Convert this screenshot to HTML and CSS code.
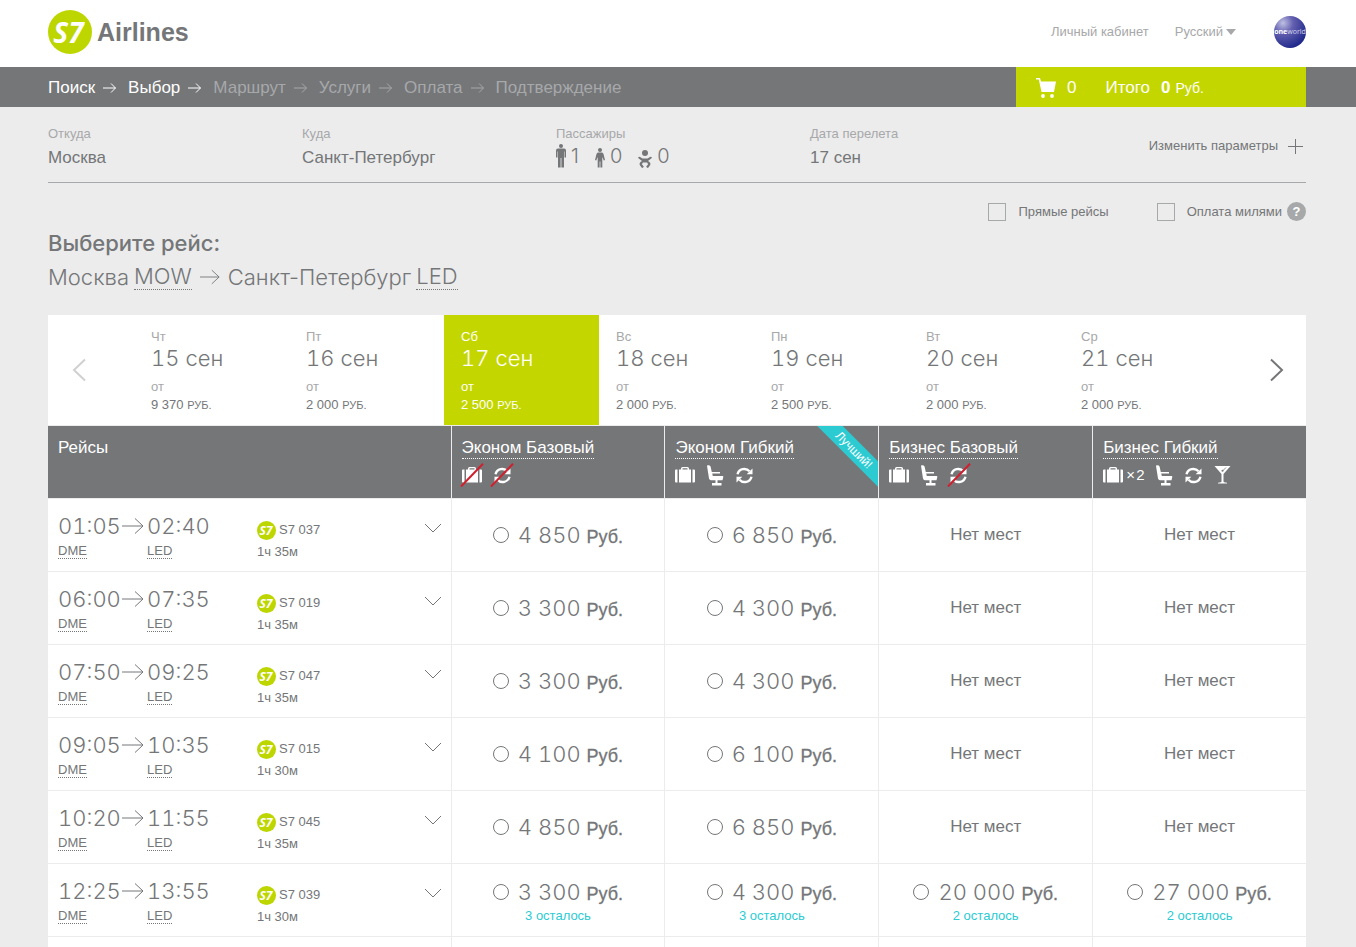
FILE: index.html
```html
<!DOCTYPE html>
<html lang="ru">
<head>
<meta charset="utf-8">
<title>S7 Airlines</title>
<link rel="stylesheet" href="styles.css">
</head>
<body>
<svg class="sprite" aria-hidden="true">
  <symbol id="step" viewBox="0 0 14 12"><path d="M0 6H12.500M8 1.500L12.500 6L8 10.500"/></symbol>
  <symbol id="arrow" viewBox="0 0 22 18"><path d="M0 9H21M13 1.500L21 9L13 16.500"/></symbol>
  <symbol id="down" viewBox="0 0 18 10"><path d="M1 1L9 9L17 1"/></symbol>
  <symbol id="bag" viewBox="0 0 20 16"><path d="M0 3.500Q0 2.500 1 2.500H2.500V15.500H1Q0 15.500 0 14.500ZM4 2.500H6V1.500Q6 0 7.500 0H12.500Q14 0 14 1.500V2.500H16V15.500H4ZM7.500 2.500H12.500V1.300H7.500ZM17.500 2.500H19Q20 2.500 20 3.500V14.500Q20 15.500 19 15.500H17.500Z" fill-rule="evenodd"/></symbol>
  <symbol id="seat" viewBox="0 0 17 21"><path d="M0 .8Q.2 0 1.200 .2L2.600 .6Q3.400 .8 3.600 1.800L4.800 7H13V8.600H5.200L5.800 11H15.500Q16.500 11 16.300 12L15.500 15.200H10.500V18H14.500V20.500H5V18H8.500V15.200H4Q2.500 15.200 2 13.500Z"/></symbol>
  <symbol id="swap" viewBox="0 0 17 17"><path d="M1.500 7.300A7 7 0 0 1 13.500 4.300M15.500 9.700A7 7 0 0 1 3.500 12.700" fill="none" stroke="currentColor" stroke-width="2.400"/><path d="M16.500 1.500V7.300H10.700ZM.5 15.500V9.700H6.300Z"/></symbol>
  <symbol id="glass" viewBox="0 0 17 18"><path d="M.5 0H16.500L9.500 8V15.500Q9.500 16.500 13 16.700V17.500H4V16.700Q7.500 16.500 7.500 15.500V8Z"/><path d="M8.500 5L12 1.500" stroke="#747678" stroke-width=".8"/><circle cx="8.500" cy="4.800" r="1" fill="#747678"/></symbol>
  <symbol id="slash" viewBox="0 0 24 24"><path d="M1 23.500L23 .8"/></symbol>
</svg>

<header class="top">
  <a class="brand" href="#"><span class="mark">S7</span>Airlines</a>
  <div class="top-links">
    <a href="#">Личный кабинет</a>
    <button class="lang" type="button">Русский<span class="caret"></span></button>
    <svg class="oneworld" viewBox="0 0 32 32" role="img" aria-label="oneworld">
      <defs><radialGradient id="globe" cx=".28" cy=".22" r=".8"><stop offset="0" stop-color="#bfc0e4"/><stop offset=".4" stop-color="#6460b0"/><stop offset="1" stop-color="#222b8c"/></radialGradient></defs>
      <circle cx="16" cy="16" r="16" fill="url(#globe)"/>
      <text x="16" y="18" text-anchor="middle"><tspan class="one">one</tspan>world</text>
    </svg>
  </div>
</header>

<nav class="bar" aria-label="Шаги">
  <ol class="steps">
    <li class="done">Поиск<svg><use href="#step"/></svg></li>
    <li class="done">Выбор<svg><use href="#step"/></svg></li>
    <li>Маршрут<svg><use href="#step"/></svg></li>
    <li>Услуги<svg><use href="#step"/></svg></li>
    <li>Оплата<svg><use href="#step"/></svg></li>
    <li>Подтверждение</li>
  </ol>
  <div class="basket">
    <svg class="cart" viewBox="0 0 20 20"><path d="M0 0H4L5 3.500H20L18 14H5.500L2.800 1.500H0Z"/><circle cx="7" cy="18" r="1.900"/><circle cx="16" cy="18" r="1.900"/></svg>
    <span class="count">0</span>
    <span class="total">Итого</span>
    <b>0</b>
    <small>Руб.</small>
  </div>
</nav>

<main class="page">
  <section class="params">
    <div><span class="label">Откуда</span><span class="value">Москва</span></div>
    <div><span class="label">Куда</span><span class="value">Санкт-Петербург</span></div>
    <div><span class="label">Пассажиры</span>
      <div class="pax">
        <svg class="adult" viewBox="0 0 10 24"><circle cx="5" cy="2" r="2"/><path d="M2 4.500H8Q10 4.500 10 6.500V13.500H8.500V7.500H8V23.500H5.400V14H4.600V23.500H2V7.500H1.500V13.500H0V6.500Q0 4.500 2 4.500Z"/></svg><span>1</span>
        <svg class="child" viewBox="0 0 10 20"><circle cx="5" cy="2" r="2"/><path d="M3 4.500H7Q8 4.500 8.500 6L10 12L8.800 12.500L7.300 9V19.500H5.400V13.500H4.600V19.500H2.700V9L1.200 12.500L0 12L1.500 6Q2 4.500 3 4.500Z"/></svg><span>0</span>
        <svg class="baby" viewBox="0 0 14 18"><circle cx="7" cy="3" r="3"/><path d="M.2 7.200Q1 6.200 2 7L4.500 8.500H9.500L12 7Q13 6.200 13.800 7.200Q14 8 13.200 8.600L10 11V12.500H4V11L.8 8.600Q0 8 .2 7.200Z"/><path d="M4.500 12Q1.500 13.500 3.500 15.500L5 17.500M9.500 12Q12.500 13.500 10.500 15.500L9 17.500" fill="none" stroke="currentColor" stroke-width="2.200"/></svg><span>0</span>
      </div>
    </div>
    <div><span class="label">Дата перелета</span><span class="value">17 сен</span></div>
    <button class="change" type="button">Изменить параметры<svg viewBox="0 0 15 15"><path d="M7.500 0V15M0 7.500H15"/></svg></button>
  </section>

  <div class="filters">
    <label><input type="checkbox">Прямые рейсы</label>
    <div class="miles"><label><input type="checkbox">Оплата милями</label><button class="help" type="button" aria-label="Справка">?</button></div>
  </div>

  <h1>Выберите рейс:</h1>
  <h2>Москва <abbr>MOW</abbr><svg><use href="#arrow"/></svg>Санкт-Петербург <abbr>LED</abbr></h2>

  <section class="days">
    <button class="prev" type="button" aria-label="Назад"><svg viewBox="0 0 14 24"><path d="M13 1.500L2 12L13 22.500"/></svg></button>
    <button class="day" type="button"><i>Чт</i><strong>15 сен</strong><i>от</i><span>9 370 <small>РУБ.</small></span></button>
    <button class="day" type="button"><i>Пт</i><strong>16 сен</strong><i>от</i><span>2 000 <small>РУБ.</small></span></button>
    <button class="day active" type="button"><i>Сб</i><strong>17 сен</strong><i>от</i><span>2 500 <small>РУБ.</small></span></button>
    <button class="day" type="button"><i>Вс</i><strong>18 сен</strong><i>от</i><span>2 000 <small>РУБ.</small></span></button>
    <button class="day" type="button"><i>Пн</i><strong>19 сен</strong><i>от</i><span>2 500 <small>РУБ.</small></span></button>
    <button class="day" type="button"><i>Вт</i><strong>20 сен</strong><i>от</i><span>2 000 <small>РУБ.</small></span></button>
    <button class="day" type="button"><i>Ср</i><strong>21 сен</strong><i>от</i><span>2 000 <small>РУБ.</small></span></button>
    <button class="next" type="button" aria-label="Вперед"><svg viewBox="0 0 14 24"><path d="M1 1.500L12 12L1 22.500"/></svg></button>
  </section>

  <table class="fares">
    <thead>
      <tr>
        <th class="flights">Рейсы</th>
        <th><a href="#">Эконом Базовый</a>
          <div class="perks"><span class="perk no"><svg class="bag"><use href="#bag"/></svg><svg class="slash"><use href="#slash"/></svg></span><span class="perk no"><svg class="swap"><use href="#swap"/></svg><svg class="slash"><use href="#slash"/></svg></span></div></th>
        <th class="best"><a href="#">Эконом Гибкий</a>
          <div class="perks"><svg class="bag"><use href="#bag"/></svg><svg class="seat"><use href="#seat"/></svg><svg class="swap"><use href="#swap"/></svg></div>
          <span class="ribbon">Лучший!</span></th>
        <th><a href="#">Бизнес Базовый</a>
          <div class="perks"><svg class="bag"><use href="#bag"/></svg><svg class="seat"><use href="#seat"/></svg><span class="perk no"><svg class="swap"><use href="#swap"/></svg><svg class="slash"><use href="#slash"/></svg></span></div></th>
        <th><a href="#">Бизнес Гибкий</a>
          <div class="perks"><span class="double"><svg class="bag"><use href="#bag"/></svg>×&#8202;2</span><svg class="seat"><use href="#seat"/></svg><svg class="swap"><use href="#swap"/></svg><svg class="glass"><use href="#glass"/></svg></div></th>
      </tr>
    </thead>
    <tbody>
      <tr>
        <td><div class="flight"><div><span class="time">01:05<svg><use href="#arrow"/></svg></span><abbr>DME</abbr></div><div><span class="time">02:40</span><abbr>LED</abbr></div><div class="info"><span><b class="mark mini">S7</b>S7 037</span><span>1ч 35м</span></div><button class="more" type="button" aria-label="Подробнее"><svg><use href="#down"/></svg></button></div></td>
        <td><label class="price"><input type="radio" name="fare"><span>4 850 <small>Руб.</small></span></label></td>
        <td><label class="price"><input type="radio" name="fare"><span>6 850 <small>Руб.</small></span></label></td>
        <td>Нет мест</td>
        <td>Нет мест</td>
      </tr>
      <tr>
        <td><div class="flight"><div><span class="time">06:00<svg><use href="#arrow"/></svg></span><abbr>DME</abbr></div><div><span class="time">07:35</span><abbr>LED</abbr></div><div class="info"><span><b class="mark mini">S7</b>S7 019</span><span>1ч 35м</span></div><button class="more" type="button" aria-label="Подробнее"><svg><use href="#down"/></svg></button></div></td>
        <td><label class="price"><input type="radio" name="fare"><span>3 300 <small>Руб.</small></span></label></td>
        <td><label class="price"><input type="radio" name="fare"><span>4 300 <small>Руб.</small></span></label></td>
        <td>Нет мест</td>
        <td>Нет мест</td>
      </tr>
      <tr>
        <td><div class="flight"><div><span class="time">07:50<svg><use href="#arrow"/></svg></span><abbr>DME</abbr></div><div><span class="time">09:25</span><abbr>LED</abbr></div><div class="info"><span><b class="mark mini">S7</b>S7 047</span><span>1ч 35м</span></div><button class="more" type="button" aria-label="Подробнее"><svg><use href="#down"/></svg></button></div></td>
        <td><label class="price"><input type="radio" name="fare"><span>3 300 <small>Руб.</small></span></label></td>
        <td><label class="price"><input type="radio" name="fare"><span>4 300 <small>Руб.</small></span></label></td>
        <td>Нет мест</td>
        <td>Нет мест</td>
      </tr>
      <tr>
        <td><div class="flight"><div><span class="time">09:05<svg><use href="#arrow"/></svg></span><abbr>DME</abbr></div><div><span class="time">10:35</span><abbr>LED</abbr></div><div class="info"><span><b class="mark mini">S7</b>S7 015</span><span>1ч 30м</span></div><button class="more" type="button" aria-label="Подробнее"><svg><use href="#down"/></svg></button></div></td>
        <td><label class="price"><input type="radio" name="fare"><span>4 100 <small>Руб.</small></span></label></td>
        <td><label class="price"><input type="radio" name="fare"><span>6 100 <small>Руб.</small></span></label></td>
        <td>Нет мест</td>
        <td>Нет мест</td>
      </tr>
      <tr>
        <td><div class="flight"><div><span class="time">10:20<svg><use href="#arrow"/></svg></span><abbr>DME</abbr></div><div><span class="time">11:55</span><abbr>LED</abbr></div><div class="info"><span><b class="mark mini">S7</b>S7 045</span><span>1ч 35м</span></div><button class="more" type="button" aria-label="Подробнее"><svg><use href="#down"/></svg></button></div></td>
        <td><label class="price"><input type="radio" name="fare"><span>4 850 <small>Руб.</small></span></label></td>
        <td><label class="price"><input type="radio" name="fare"><span>6 850 <small>Руб.</small></span></label></td>
        <td>Нет мест</td>
        <td>Нет мест</td>
      </tr>
      <tr>
        <td><div class="flight"><div><span class="time">12:25<svg><use href="#arrow"/></svg></span><abbr>DME</abbr></div><div><span class="time">13:55</span><abbr>LED</abbr></div><div class="info"><span><b class="mark mini">S7</b>S7 039</span><span>1ч 30м</span></div><button class="more" type="button" aria-label="Подробнее"><svg><use href="#down"/></svg></button></div></td>
        <td><label class="price"><input type="radio" name="fare"><span>3 300 <small>Руб.</small></span></label><span class="left">3 осталось</span></td>
        <td><label class="price"><input type="radio" name="fare"><span>4 300 <small>Руб.</small></span></label><span class="left">3 осталось</span></td>
        <td><label class="price"><input type="radio" name="fare"><span>20 000 <small>Руб.</small></span></label><span class="left">2 осталось</span></td>
        <td><label class="price"><input type="radio" name="fare"><span>27 000 <small>Руб.</small></span></label><span class="left">2 осталось</span></td>
      </tr>
      <tr class="rest"><td></td><td></td><td></td><td></td><td></td></tr>
    </tbody>
  </table>
</main>
</body>
</html>
```
FILE: styles.css
```css
* { box-sizing: border-box; }
body {
  margin: 0;
  background: #ececec;
  color: #747678;
  font: 13px/16px "Liberation Sans", Arial, sans-serif;
  font-variant-numeric: tabular-nums;
}
.sprite { position: absolute; width: 0; height: 0; }
svg { display: block; flex: none; fill: currentColor; }
a { color: inherit; text-decoration: none; }
button { margin: 0; padding: 0; border: 0; background: none; color: inherit; font: inherit; text-align: left; }
abbr { border-bottom: 1px dotted #747678; }
i { font-style: normal; }
input { margin: 0; appearance: none; border: 1px solid #a7a8aa; }
#step path, #arrow path, #down path { fill: none; stroke: currentColor; }
#slash path { fill: none; stroke: #d0202e; stroke-width: 2; }

.mark {
  flex: none;
  width: 44px;
  height: 44px;
  padding-right: 3px;
  border-radius: 50%;
  background: #bed600;
  color: #fff;
  font: italic 700 28px/44px "Open Sans", sans-serif;
  text-align: center;
}
.mini { width: 19px; height: 19px; padding-right: 1px; font-size: 12px; line-height: 19px; }

.top {
  display: flex;
  align-items: center;
  justify-content: space-between;
  height: 67px;
  padding: 0 50px 3px 48px;
  background: #fff;
}
.brand { display: flex; align-items: center; gap: 5px; font-size: 25px; font-weight: 700; line-height: 30px; }
.top-links { display: flex; align-items: center; color: #a7a8aa; gap: 26px; }
.lang { display: flex; align-items: center; gap: 3px; margin-right: 12px; }
.caret { border: 5px solid transparent; border-top: 6px solid #a7a8aa; border-bottom: 0; }
.oneworld { width: 32px; height: 32px; }
.oneworld text { fill: #d5d5ee; font: 7px "Open Sans", sans-serif; }
.oneworld .one { fill: #fff; font-weight: 700; }

.bar {
  display: flex;
  justify-content: space-between;
  height: 40px;
  padding: 0 50px 0 48px;
  background: #747678;
  font-size: 17px;
  line-height: 40px;
}
.steps { display: flex; gap: 11px; margin: 0; padding: 1px 0 0; list-style: none; color: #a7a8aa; }
.steps li { display: flex; align-items: center; gap: 8px; }
.steps svg { width: 14px; height: 12px; }
.steps .done { color: #fff; }
.basket { display: flex; align-items: center; width: 290px; padding: 2px 20px 0; background: #c4d600; color: #fff; }
.cart { width: 20px; height: 20px; margin-right: 11px; }
.count { margin-right: 29px; }
.total { margin-right: 11px; }
.basket b { margin-right: 5px; }
.basket small { font-size: 14px; }

.page { margin: 0 50px 0 48px; }
.params {
  display: grid;
  grid-template-columns: repeat(4, 1fr) 242px;
  height: 76px;
  padding-top: 19px;
  border-bottom: 1px solid #a7a8aa;
}
.label { display: block; color: #a7a8aa; }
.value { display: block; margin-top: 6px; font-size: 17px; line-height: 20px; }
.pax { display: flex; align-items: center; font: 300 20px/24px Inter, sans-serif; margin-top: 2px; }
.pax svg { margin-right: 5px; align-self: flex-end; }
.pax span { margin-right: 16px; }
.adult { width: 10px; height: 24px; }
.child { width: 10px; height: 20px; }
.baby { width: 14px; height: 18px; }
.change { display: flex; align-items: center; justify-content: flex-end; gap: 10px; height: 40px; padding-right: 3px; }
.change svg { width: 15px; height: 15px; stroke: #747678; }

.filters { display: flex; justify-content: flex-end; gap: 48px; margin-top: 19px; }
.filters label, .miles { display: flex; align-items: center; }
.filters input { width: 18px; height: 18px; margin-right: 12px; }
.help { width: 19px; height: 19px; margin-left: 5px; border-radius: 50%; background: #a7a8aa; color: #fff; font-weight: 700; text-align: center; }

h1 { margin: 8px 0 0; font: 500 22px/28px Inter, sans-serif; }
h2 { display: flex; gap: 5px; align-items: center; margin: 6px 0 24px; font: 300 22px/28px Inter, sans-serif; }
h2 abbr { line-height: 25px; }
h2 svg { width: 20px; height: 18px; margin: 0 3px; }

.days { display: grid; grid-template-columns: 86px repeat(7, 1fr) 87px; height: 110px; background: #fff; font-variant-numeric: tabular-nums; }
.prev, .next { display: flex; align-items: center; padding: 0 24px; color: #d0d0d0; }
.next { justify-content: flex-end; padding-right: 22px; color: #747678; }
.prev svg, .next svg { width: 14px; height: 24px; fill: none; stroke: currentColor; stroke-width: 2; }
.day { display: flex; flex-direction: column; padding: 14px 17px 0; }
.day i { color: #a7a8aa; }
.day strong { margin-bottom: 8px; font: 300 22px/26px Inter, sans-serif; font-variant-numeric: tabular-nums; }
.day span { line-height: 20px; }
.day small { font-size: 11px; }
.day.active { background: #c4d600; color: #fff; }
.day.active i { color: #fff; }

.fares { width: 100%; margin-top: 1px; border-collapse: separate; border-spacing: 0; table-layout: fixed; background: #fff; font-size: 17px; line-height: 20px; }
.fares th { height: 72px; padding: 12px 10px 0; border-left: 1px solid #ececec; background: #747678; color: #fff; font-weight: 400; text-align: left; vertical-align: top; }
.fares th:first-child, .fares td:first-child { border-left: 0; }
.fares .flights { width: 32%; }
.fares th a { display: inline-block; border-bottom: 1px dotted #fff; }
.fares td { height: 73px; padding: 0; border: 1px solid #ececec; border-width: 1px 0 0 1px; text-align: center; }
.fares .rest td { height: 11px; }
.perks { display: flex; align-items: center; gap: 12px; height: 24px; margin-top: 4px; }
.perk { position: relative; }
.slash { position: absolute; top: 50%; left: 50%; width: 24px; height: 24px; transform: translate(-50%, -50%); }
.bag { width: 20px; height: 16px; }
.seat { width: 17px; height: 21px; }
.swap { width: 17px; height: 17px; }
.glass { width: 17px; height: 18px; }
.double { display: flex; align-items: center; gap: 3px; font-size: 15px; }
.best { position: relative; overflow: hidden; }
.ribbon { position: absolute; top: 15px; right: -31px; width: 110px; height: 18px; transform: rotate(45deg); background: #2ccbd2; font-size: 12px; line-height: 18px; text-align: center; }

.flight { display: grid; grid-template-columns: 89px 110px 1fr auto; height: 72px; padding: 12px 9px 0 10px; text-align: left; font-size: 13px; line-height: 16px; }
.time { display: flex; align-items: center; justify-content: space-between; margin-bottom: 2px; padding-right: 3px; font: 300 22px/30px Inter, sans-serif; font-variant-numeric: tabular-nums; }
.time svg { width: 22px; height: 18px; }
.info { display: flex; flex-direction: column; gap: 4px; padding-top: 10px; }
.info span { display: flex; align-items: center; gap: 3px; height: 18px; }
.more { height: 34px; }
.more svg { width: 18px; height: 10px; }
.price { display: flex; align-items: center; justify-content: center; gap: 9px; font: 300 22px/30px Inter, sans-serif; font-variant-numeric: tabular-nums; }
.price input { width: 16px; height: 16px; border-color: #747678; border-radius: 50%; }
.price small { font: 18px "Liberation Sans", Arial, sans-serif; -webkit-text-stroke: 0.3px; }
.left { display: block; margin-top: 1px; color: #2ccbd2; font-size: 13px; line-height: 16px; }
```
